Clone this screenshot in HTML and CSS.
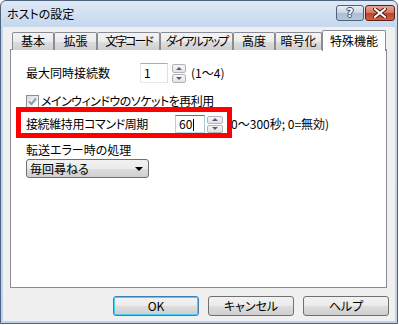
FILE: index.html
```html
<!DOCTYPE html>
<html lang="ja">
<head>
    <meta charset="UTF-8">
    <title>ホストの設定</title>
    <link rel="stylesheet" href="styles.css">
</head>
<body>
    <div class="window">
        <div class="titlebar">
            <span class="title">ホストの設定</span>
            <div class="caption-btns">
                <div class="cap cap-help">?</div>
                <div class="cap cap-close">
                    <svg width="14" height="10" viewBox="0 0 14 10">
                        <path d="M2 1 L12 9 M12 1 L2 9" stroke="#4a1a10" stroke-width="4" stroke-linecap="square"/>
                        <path d="M2 1 L12 9 M12 1 L2 9" stroke="#fff" stroke-width="2" stroke-linecap="square"/>
                    </svg>
                </div>
            </div>
        </div>

        <div class="client">
            <div class="tabs">
                <div class="tab tab-basic">基本</div>
                <div class="tab tab-ext">拡張</div>
                <div class="tab tab-code">文字コード</div>
                <div class="tab tab-dial">ダイアルアップ</div>
                <div class="tab tab-adv">高度</div>
                <div class="tab tab-enc">暗号化</div>
                <div class="tab tab-special active">特殊機能</div>
            </div>

            <div class="panel">
                <div class="row row-max">
                    <span class="label label-max">最大同時接続数</span>
                    <div class="edit edit-max">1</div>
                    <div class="spin">
                        <div class="spin-btn"><span class="arr-up"></span></div>
                        <div class="spin-btn"><span class="arr-down"></span></div>
                    </div>
                    <span class="hint">(1～4)</span>
                </div>

                <label class="row check-row">
                    <span class="checkbox">
                        <svg width="9" height="9" viewBox="0 0 9 9">
                            <path d="M1 4.5 L3.5 7 L8 1.5" fill="none" stroke="#8a9ac0" stroke-width="2"/>
                        </svg>
                    </span>
                    <span class="check-text">メインウィンドウのソケットを再利用</span>
                </label>

                <div class="row row-keep">
                    <span class="label label-keep">接続維持用コマンド周期</span>
                    <div class="edit edit-keep focused">60<span class="caret"></span></div>
                    <div class="spin spin-keep">
                        <div class="spin-btn"><span class="arr-up"></span></div>
                        <div class="spin-btn"><span class="arr-down"></span></div>
                    </div>
                    <span class="hint hint-keep">(0～300秒; 0=無効)</span>
                </div>

                <div class="row row-err">転送エラー時の処理</div>
                <div class="combo">
                    <span>毎回尋ねる</span>
                    <span class="combo-arrow"></span>
                </div>

                <div class="highlight"></div>
            </div>

            <div class="buttons">
                <div class="btn btn-default">OK</div>
                <div class="btn">キャンセル</div>
                <div class="btn">ヘルプ</div>
            </div>
        </div>
    </div>
</body>
</html>
```

FILE: styles.css
```css
* {
    box-sizing: border-box;
}

body {
    margin: 0;
    background: #ffffff;
    font-family: "Noto Sans CJK JP", "Noto Sans", sans-serif;
    font-size: 12px;
    line-height: 14px;
    font-feature-settings: "palt";
    color: #000;
}

.window {
    width: 398px;
    height: 324px;
    border: 1px solid #4f6480;
    border-radius: 6px 6px 0 0;
    background: linear-gradient(#dfe9f6, #c4d7ee 27px, #bdd3ec);
    padding: 0 2px 2px;
    display: flex;
    flex-direction: column;
}

.titlebar {
    height: 26px;
    display: flex;
    align-items: center;
    justify-content: space-between;
    padding: 0 0 0 4px;
}

.title {
    color: #000;
}

.caption-btns {
    display: flex;
    gap: 1px;
    align-self: flex-start;
    margin-top: 4px;
}

.cap {
    height: 16px;
    border: 1px solid #4d607c;
    border-radius: 3px;
    display: flex;
    align-items: center;
    justify-content: center;
}

.cap-help {
    width: 28px;
    background: linear-gradient(#e6edf6, #c9d6e6 50%, #aabdd6 51%, #b6c8de);
    color: #fff;
    font-family: "DejaVu Sans", sans-serif;
    font-weight: bold;
    font-size: 12px;
    text-shadow: 1px 0 #3b4a5e, -1px 0 #3b4a5e, 0 1px #3b4a5e, 0 -1px #3b4a5e;
}

.cap-close {
    width: 30px;
    border-color: #5a2218;
    background: linear-gradient(#e8a493, #d7745f 50%, #c24128 51%, #d0603f);
}

.client {
    flex: 1;
    background: #f0f0f0;
    display: flex;
    flex-direction: column;
    padding: 3px 8px 5px 7px;
}

.tabs {
    display: flex;
    height: 20px;
    padding-left: 2px;
    position: relative;
    z-index: 1;
}

.tab {
    flex-shrink: 0;
    white-space: nowrap;
    overflow: hidden;
    margin-top: 2px;
    height: 18px;
    border: 1px solid #898c95;
    border-bottom: none;
    border-radius: 2px 2px 0 0;
    background: linear-gradient(#f3f3f3, #ebebeb 50%, #dddddd 51%, #cfcfcf);
    line-height: 16px;
    text-align: center;
}

.tab-basic { width: 42px; }
.tab-ext { width: 43px; }
.tab-code { width: 63px; letter-spacing: -2px; }
.tab-dial { width: 73px; letter-spacing: -2px; }
.tab-adv { width: 42px; }
.tab-enc { width: 47px; }

.tab.active {
    width: 64px;
    margin-top: 0;
    height: 21px;
    background: #ffffff;
    line-height: 19px;
}

.panel {
    flex: 1;
    margin-top: -1px;
    border: 1px solid #898c95;
    background: #ffffff;
    padding: 13px 0 0 15px;
    position: relative;
}

.row {
    display: flex;
    align-items: center;
}

.label-max {
    width: 114px;
}

.edit {
    height: 20px;
    border: 1px solid #abadb3;
    border-color: #abadb3 #dbdfe6 #e3e9ef #e2e3ea;
    padding-left: 3px;
    line-height: 18px;
    background: #fff;
}

.edit-max {
    width: 28px;
}

.spin {
    display: flex;
    flex-direction: column;
    gap: 1px;
    margin-left: 4px;
}

.spin-btn {
    width: 14px;
    height: 9px;
    border: 1px solid #b3b3b3;
    border-radius: 2px;
    background: linear-gradient(#f6f6f6, #e3e3e3);
    display: flex;
    align-items: center;
    justify-content: center;
}

.arr-up {
    border-left: 3px solid transparent;
    border-right: 3px solid transparent;
    border-bottom: 3px solid #4c607f;
}

.arr-down {
    border-left: 3px solid transparent;
    border-right: 3px solid transparent;
    border-top: 3px solid #4c607f;
}

.hint {
    margin-left: 5px;
}

.check-row {
    margin-top: 11px;
    height: 14px;
    gap: 2px;
}

.check-text {
    letter-spacing: -0.5px;
}

.checkbox {
    width: 13px;
    height: 13px;
    border: 1px solid #8e8f8f;
    background: linear-gradient(135deg, #dcdcdc, #ffffff);
    display: flex;
    align-items: center;
    justify-content: center;
}

.row-keep {
    margin-top: 7px;
}

.label-keep {
    width: 149px;
    letter-spacing: -0.4px;
}

.edit-keep {
    width: 30px;
    height: 18px;
    line-height: 16px;
}

.edit.focused {
    border-color: #3d7bad #a4c9e3 #b7d9ed #b5cfe7;
}

.caret {
    display: inline-block;
    width: 1px;
    height: 12px;
    background: #000;
    vertical-align: -2px;
    margin-left: 1px;
}

.spin-keep {
    margin-left: 2px;
}

.spin-keep .spin-btn {
    width: 16px;
    height: 8px;
}

.hint-keep {
    margin-left: 4px;
}

.row-err {
    margin-top: 10px;
}

.combo {
    margin-top: 2px;
    width: 123px;
    height: 19px;
    border: 1px solid #707070;
    border-radius: 3px;
    background: linear-gradient(#f2f2f2, #ebebeb 50%, #dddddd 51%, #cfcfcf);
    display: flex;
    align-items: center;
    justify-content: space-between;
    padding: 0 3px 0 3px;
}

.combo-arrow {
    border-left: 4px solid transparent;
    border-right: 4px solid transparent;
    border-top: 4px solid #000;
    margin-right: 2px;
}

.highlight {
    position: absolute;
    left: 5px;
    top: 57px;
    width: 216px;
    height: 31px;
    border: 5px solid #ff0000;
}

.buttons {
    display: flex;
    justify-content: flex-end;
    gap: 9px;
    margin: 8px -2px 0 0;
}

.btn {
    width: 86px;
    height: 20px;
    border: 1px solid #707070;
    border-radius: 3px;
    background: linear-gradient(#f2f2f2, #ebebeb 50%, #dddddd 51%, #cfcfcf);
    text-align: center;
    line-height: 18px;
}

.btn-default {
    border-color: #3c7fb1;
    box-shadow: inset 0 0 0 1px #48d0f9;
}
```
